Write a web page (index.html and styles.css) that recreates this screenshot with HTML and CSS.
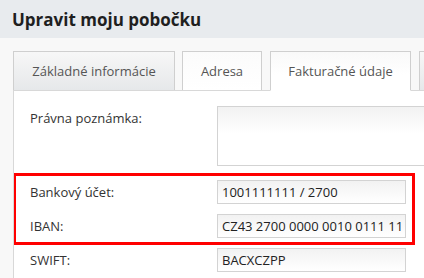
FILE: index.html
```html
<!DOCTYPE html>
<html lang="sk">
<head>
<meta charset="utf-8">
<title>Upraviť moju pobočku</title>
<link rel="stylesheet" href="styles.css">
</head>
<body>
<header class="page-header">
  <h1 class="page-title">Upravit moju pobočku</h1>
</header>
<main class="content">
  <nav class="tabs">
    <div class="tab tab-basic">Základné informácie</div>
    <div class="tab tab-address">Adresa</div>
    <div class="tab tab-active">Fakturačné údaje</div>
    <div class="tab tab-more"></div>
  </nav>
  <section class="panel">
    <div class="row row-textarea">
      <label class="label">Právna poznámka:</label>
      <div class="field textarea"></div>
    </div>
    <div class="row">
      <label class="label">Bankový účet:</label>
      <div class="field input">1001111111 / 2700</div>
    </div>
    <div class="row">
      <label class="label">IBAN:</label>
      <div class="field input">CZ43 2700 0000 0010 0111 11</div>
    </div>
    <div class="row row-last">
      <label class="label">SWIFT:</label>
      <div class="field input">BACXCZPP</div>
    </div>
    <div class="highlight"></div>
  </section>
</main>
</body>
</html>
```
FILE: styles.css
```css
* { box-sizing: border-box; }
html, body { margin: 0; padding: 0; }
body {
  width: 424px;
  height: 278px;
  overflow: hidden;
  background: #f8f8f8;
  font-family: "Open Sans", "Liberation Sans", sans-serif;
  font-size: 13px;
  color: #333;
}
.page-header {
  height: 38px;
  background: #e8ebee;
  padding-left: 12px;
  display: flex;
  align-items: center;
}
.page-title {
  margin: 0;
  font-size: 17px;
  font-weight: 700;
  color: #1f1f1f;
  line-height: 1;
}
.content {
  padding: 13px 0 0 13px;
  overflow: hidden;
  height: 240px;
}
.tabs {
  display: flex;
  height: 40px;
  white-space: nowrap;
  overflow: hidden;
}
.tab {
  flex: none;
  height: 40px;
  display: flex;
  align-items: center;
  justify-content: center;
  border: 1px solid #cfcfcf;
  background: linear-gradient(#f7f7f7, #e6e8ea);
  color: #555;
  font-size: 13px;
}
.tab-basic { width: 162px; }
.tab-address {
  width: 80px;
  margin-left: 7px;
  background: linear-gradient(#fbfbfb, #ffffff);
}
.tab-active {
  width: 141px;
  margin-left: 8px;
  background: linear-gradient(#f9f9f9, #ffffff 60%);
  border-bottom-color: #fff;
  position: relative;
  z-index: 1;
}
.tab-more { width: 40px; margin-left: 8px; }
.panel {
  position: relative;
  margin-top: -1px;
  background: #fff;
  border-top: 1px solid #d8d8d8;
  border-left: 1px solid #d8d8d8;
  padding: 15px 0 0 16px;
  height: 200px;
  overflow: hidden;
}
.row {
  display: flex;
  align-items: flex-start;
  margin-bottom: 10px;
}
.row-textarea { margin-bottom: 14px; }
.row-last { margin-bottom: 0; }
.label {
  width: 187px;
  flex: none;
  line-height: 24px;
  color: #333;
}
.field {
  flex: none;
  border: 1px solid #d3d3d3;
  background: linear-gradient(#f2f2f2, #ffffff);
  color: #222;
  padding: 0 4px;
  overflow: hidden;
  white-space: nowrap;
}
.input {
  width: 189px;
  height: 24px;
  line-height: 22px;
}
.textarea {
  width: 240px;
  height: 60px;
  background: linear-gradient(#f2f2f2, #ffffff 45%);
}
.highlight {
  position: absolute;
  left: -1px;
  top: 82px;
  width: 402px;
  height: 72px;
  border: 3px solid #f00;
  pointer-events: none;
}
```
